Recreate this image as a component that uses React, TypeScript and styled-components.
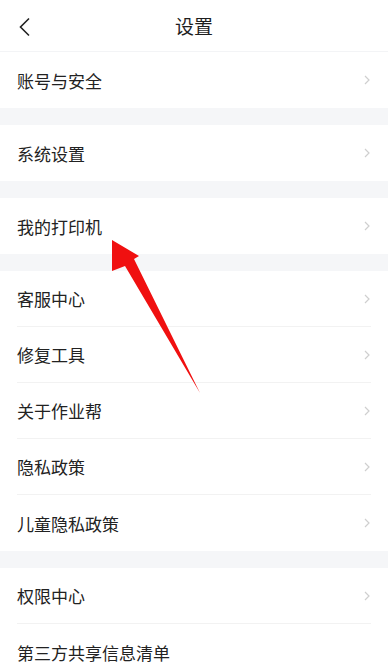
import React from "react";
import styled, { createGlobalStyle } from "styled-components";

const Global = createGlobalStyle`
  html, body { margin: 0; padding: 0; background: #ffffff; }
  body { font-family: "Noto Sans CJK SC", "Noto Sans", sans-serif; }
  * { box-sizing: border-box; }
`;

const Page = styled.div`
  position: relative;
  width: 388px;
  height: 667px;
  overflow: hidden;
  background: #ffffff;
  color: #222222;
`;

const Header = styled.div`
  height: 52px;
  display: flex;
  align-items: center;
  justify-content: center;
  position: relative;
  border-bottom: 1px solid #f3f4f6;
`;

const BackButton = styled.div`
  position: absolute;
  left: 17px;
  top: 15px;
  width: 18px;
  height: 24px;
  display: flex;
  align-items: center;
`;

const Title = styled.div`
  font-size: 19px;
  line-height: 1;
  color: #1e1e1e;
`;

const Gap = styled.div`
  height: 17px;
  background: #f5f6f8;
`;

const Section = styled.div`
  background: #ffffff;
`;

const Row = styled.div<{ $last?: boolean }>`
  height: 56px;
  margin: 0 17px;
  display: flex;
  align-items: center;
  justify-content: space-between;
  border-bottom: ${(p) => (p.$last ? "none" : "1px solid #f2f2f2")};
`;

const Label = styled.span`
  font-size: 17px;
  color: #222222;
  line-height: 1;
`;

const Arrow = styled.svg`
  position: absolute;
  left: 0;
  top: 0;
  pointer-events: none;
`;

const Chevron = () => (
  <svg width="8" height="12" viewBox="0 0 8 12">
    <path d="M2 2 L6 6 L2 10" fill="none" stroke="#cfcfcf" strokeWidth="1.2" />
  </svg>
);

const sections: { label: string; chevron: boolean }[][] = [
  [{ label: "账号与安全", chevron: true }],
  [{ label: "系统设置", chevron: true }],
  [{ label: "我的打印机", chevron: true }],
  [
    { label: "客服中心", chevron: true },
    { label: "修复工具", chevron: true },
    { label: "关于作业帮", chevron: true },
    { label: "隐私政策", chevron: true },
    { label: "儿童隐私政策", chevron: true },
  ],
  [
    { label: "权限中心", chevron: true },
    { label: "第三方共享信息清单", chevron: false },
  ],
];

export default function App() {
  return (
    <Page>
      <Global />
      <Header>
        <BackButton>
          <svg width="14" height="20" viewBox="0 0 14 20">
            <path d="M12 1.5 L3.5 10 L12 18.5" fill="none" stroke="#222" strokeWidth="1.6" />
          </svg>
        </BackButton>
        <Title>设置</Title>
      </Header>
      {sections.map((sec, i) => (
        <React.Fragment key={i}>
          {i > 0 && <Gap />}
          <Section>
            {sec.map((item, j) => (
              <Row key={item.label} $last={j === sec.length - 1}>
                <Label>{item.label}</Label>
                {item.chevron && <Chevron />}
              </Row>
            ))}
          </Section>
        </React.Fragment>
      ))}
      <Arrow width="388" height="667" viewBox="0 0 388 667">
        <polygon
          points="112,240 139,256 134,259 200,393 125,266 112,271"
          fill="#f01010"
        />
      </Arrow>
    </Page>
  );
}
